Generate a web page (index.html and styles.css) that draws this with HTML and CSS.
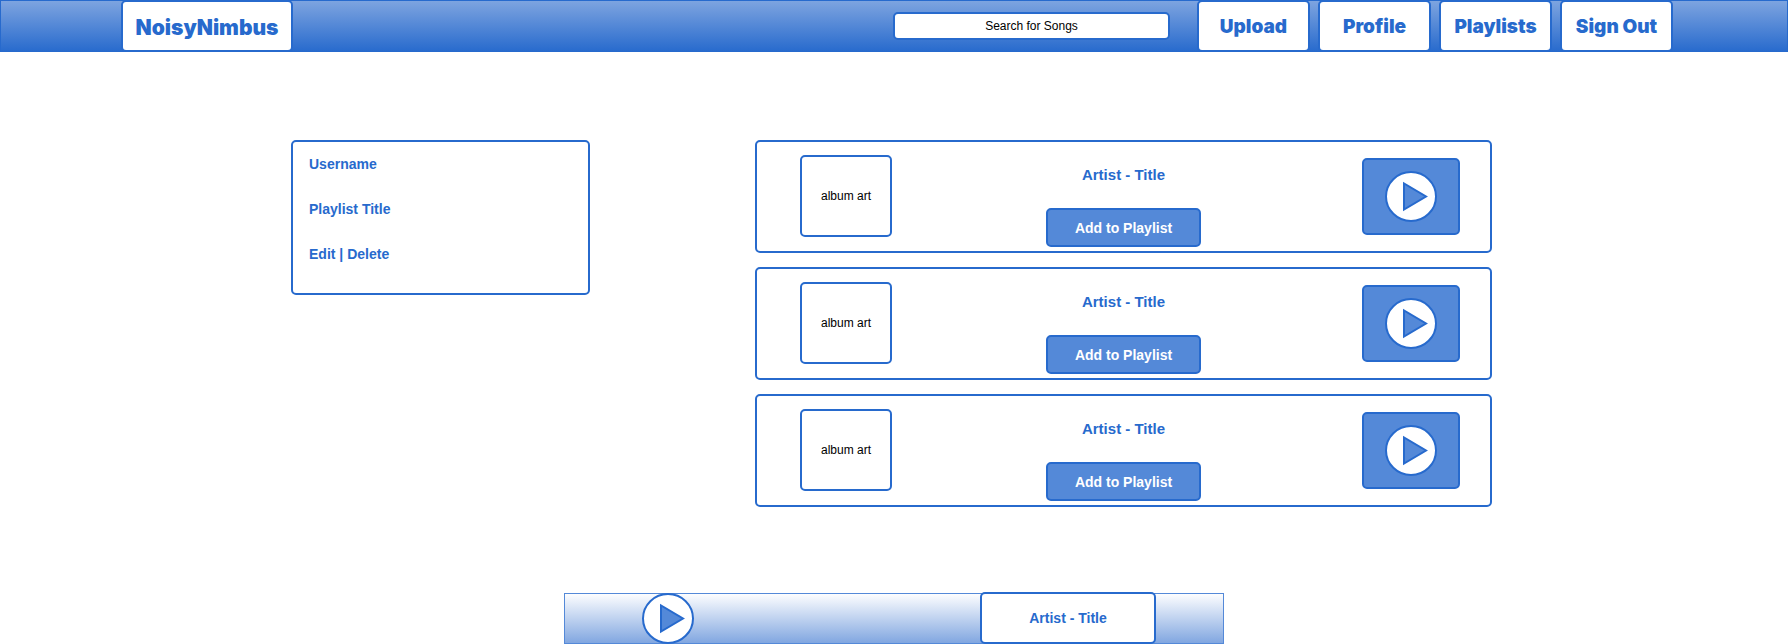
FILE: index.html
```
<!DOCTYPE html>
<html lang="en">
<head>
<meta charset="utf-8">
<meta name="viewport" content="width=device-width, initial-scale=1">
<title>NoisyNimbus</title>
<link rel="stylesheet" href="styles.css">
</head>
<body>
<svg class="sprite" aria-hidden="true">
  <symbol id="play" viewBox="0 0 52 51">
    <ellipse cx="26" cy="25.5" rx="25" ry="24.5" fill="#fff" stroke="#276acd" stroke-width="2"/>
    <path d="M19 12.5V38.5L41 25.5Z" fill="#5489d8" stroke="#276acd" stroke-width="2"/>
  </symbol>
</svg>
<header class="topbar">
  <a class="box logo" href="#">NoisyNimbus</a>
  <input class="box search" type="text" placeholder="Search for Songs" aria-label="Search for Songs">
  <nav class="nav">
    <a class="box tab" href="#">Upload</a>
    <a class="box tab" href="#">Profile</a>
    <a class="box tab" href="#">Playlists</a>
    <a class="box tab" href="#">Sign Out</a>
  </nav>
</header>
<main class="content">
  <aside class="box panel">
    <p class="line">Username</p>
    <p class="line">Playlist Title</p>
    <p class="line"><a class="action" href="#">Edit</a> | <a class="action" href="#">Delete</a></p>
  </aside>
  <section class="songs">
    <article class="box song">
      <div class="box art">album art</div>
      <div class="info">
        <h2 class="title">Artist - Title</h2>
        <button class="box add" type="button">Add to Playlist</button>
      </div>
      <button class="box play" type="button" aria-label="Play"><svg class="icon"><use href="#play"/></svg></button>
    </article>
    <article class="box song">
      <div class="box art">album art</div>
      <div class="info">
        <h2 class="title">Artist - Title</h2>
        <button class="box add" type="button">Add to Playlist</button>
      </div>
      <button class="box play" type="button" aria-label="Play"><svg class="icon"><use href="#play"/></svg></button>
    </article>
    <article class="box song">
      <div class="box art">album art</div>
      <div class="info">
        <h2 class="title">Artist - Title</h2>
        <button class="box add" type="button">Add to Playlist</button>
      </div>
      <button class="box play" type="button" aria-label="Play"><svg class="icon"><use href="#play"/></svg></button>
    </article>
  </section>
</main>
<footer class="player">
  <button class="toggle" type="button" aria-label="Play"><svg class="icon"><use href="#play"/></svg></button>
  <div class="box now">Artist - Title</div>
</footer>
</body>
</html>
```

FILE: styles.css
```
:root {
  --line: #276acd;
  --fill: #5489d8;
  --soft: #7fa5e0;
}

* {
  box-sizing: border-box;
}

body {
  margin: 0;
  min-height: 100vh;
  display: flex;
  flex-direction: column;
  background: #fff;
  color: #000;
  font: 12px/16px "Liberation Sans", Arial, sans-serif;
}

a {
  color: inherit;
  text-decoration: none;
}

button {
  font: inherit;
  padding: 0;
  cursor: pointer;
}

.sprite {
  display: none;
}

.box {
  border: 2px solid var(--line);
  border-radius: 5px;
  background: #fff;
}

.topbar {
  display: flex;
  align-items: center;
  height: 52px;
  padding: 0 115px 0 121px;
  background: linear-gradient(var(--soft), var(--line));
  box-shadow: inset 0 0 0 1px var(--line);
}

.logo,
.tab {
  display: flex;
  align-items: center;
  justify-content: center;
  height: 52px;
  color: var(--line);
  font-family: Inter, "Arial Black", sans-serif;
  font-weight: 900;
}

.logo {
  width: 172px;
  padding-top: 4px;
  font-size: 21px;
}

.search {
  width: 277px;
  height: 28px;
  margin: 0 27px 0 auto;
  padding: 0 8px;
  font: inherit;
  text-align: center;
}

.search::placeholder {
  color: #000;
  opacity: 1;
}

.nav {
  display: flex;
  gap: 8px;
}

.tab {
  width: 113px;
  padding-top: 2px;
  font-size: 19px;
}

.content {
  display: grid;
  grid-template-columns: 291fr 299fr 165fr 737fr 296fr;
  align-items: start;
  padding: 88px 0 80px;
}

.panel {
  grid-column: 2;
  display: flex;
  flex-direction: column;
  gap: 29px;
  padding: 14px 16px 31px;
  color: var(--line);
  font-size: 14px;
  font-weight: bold;
}

.line {
  margin: 0;
}

.songs {
  grid-column: 4;
  display: flex;
  flex-direction: column;
  gap: 14px;
}

.song {
  display: grid;
  grid-template-columns: 1fr auto 1fr;
  align-items: start;
  height: 113px;
}

.art {
  display: flex;
  align-items: center;
  justify-content: center;
  width: 92px;
  height: 82px;
  margin: 13px 0 0 43px;
}

.info {
  display: flex;
  flex-direction: column;
  align-items: center;
  gap: 24px;
  padding-top: 24px;
}

.title {
  margin: 0;
  color: var(--line);
  font-size: 15px;
  line-height: 18px;
}

.add {
  width: 155px;
  height: 39px;
  background: var(--fill);
  color: #fff;
  font-size: 14px;
  font-weight: bold;
}

.play {
  display: flex;
  align-items: center;
  justify-content: center;
  justify-self: end;
  width: 98px;
  height: 77px;
  margin: 16px 30px 0 0;
  background: var(--fill);
}

.icon {
  display: block;
  width: 52px;
  height: 51px;
}

.player {
  display: flex;
  align-items: flex-end;
  justify-content: space-between;
  width: 100%;
  max-width: 660px;
  height: 51px;
  margin: auto auto 0;
  padding: 0 68px 0 78px;
  background: linear-gradient(#fff, var(--soft));
  box-shadow: inset 0 0 0 1px var(--fill);
}

.toggle {
  border: 0;
  background: none;
}

.now {
  display: flex;
  align-items: center;
  justify-content: center;
  width: 176px;
  height: 52px;
  color: var(--line);
  font-size: 14px;
  font-weight: bold;
}
```
